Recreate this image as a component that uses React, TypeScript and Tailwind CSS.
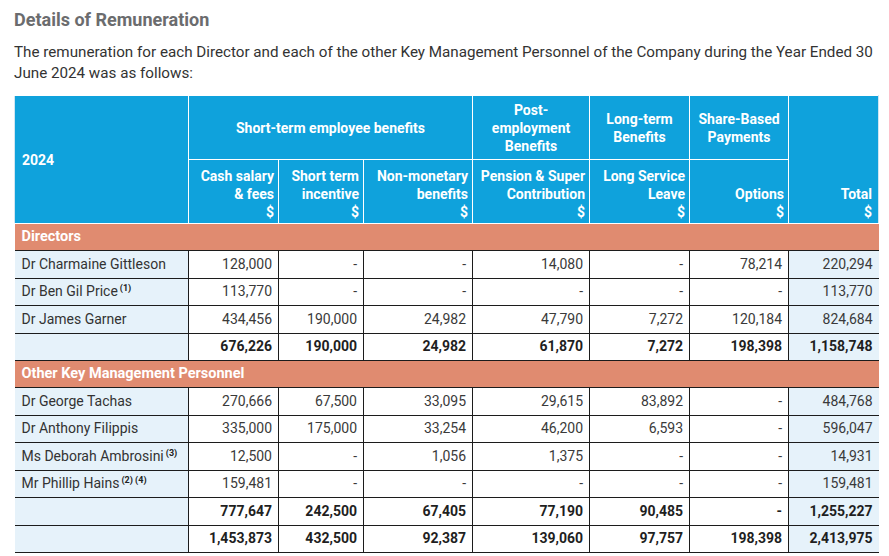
import React from "react";

const F = { fontFamily: "Roboto, 'Liberation Sans', sans-serif" };

type Row = { name: React.ReactNode; v: string[]; bold?: boolean };

const sup = (s: string) => (
  <sup className="text-[9px] font-bold text-[#222] ml-[2px] -top-[5px]">{s}</sup>
);

const directors: Row[] = [
  { name: "Dr Charmaine Gittleson", v: ["128,000", "-", "-", "14,080", "-", "78,214", "220,294"] },
  { name: <>Dr Ben Gil Price{sup("(1)")}</>, v: ["113,770", "-", "-", "-", "-", "-", "113,770"] },
  { name: "Dr James Garner", v: ["434,456", "190,000", "24,982", "47,790", "7,272", "120,184", "824,684"] },
  { name: "", v: ["676,226", "190,000", "24,982", "61,870", "7,272", "198,398", "1,158,748"], bold: true },
];

const kmp: Row[] = [
  { name: "Dr George Tachas", v: ["270,666", "67,500", "33,095", "29,615", "83,892", "-", "484,768"] },
  { name: "Dr Anthony Filippis", v: ["335,000", "175,000", "33,254", "46,200", "6,593", "-", "596,047"] },
  { name: <>Ms Deborah Ambrosini{sup("(3)")}</>, v: ["12,500", "-", "1,056", "1,375", "-", "-", "14,931"] },
  { name: <>Mr Phillip Hains{sup("(2) (4)")}</>, v: ["159,481", "-", "-", "-", "-", "-", "159,481"] },
  { name: "", v: ["777,647", "242,500", "67,405", "77,190", "90,485", "-", "1,255,227"], bold: true },
  { name: "", v: ["1,453,873", "432,500", "92,387", "139,060", "97,757", "198,398", "2,413,975"], bold: true },
];

function DataRow({ r }: { r: Row }) {
  return (
    <tr className="h-[27.5px]">
      <td className="bg-[#e6f2fa] border-y border-r border-[#1c1c1c] pl-[7px] text-[14px] text-[#333] whitespace-nowrap">
        {r.name}
      </td>
      {r.v.map((x, i) => (
        <td
          key={i}
          className={
            "border-y border-[#1c1c1c] text-right pr-[6px] text-[14px] " +
            (r.bold ? "font-bold text-[#1f1f1f] " : "text-[#3a3a3a] ") +
            (i === 6 ? "bg-[#e6f2fa]" : "border-r")
          }
        >
          {x}
        </td>
      ))}
    </tr>
  );
}

function Band({ label }: { label: string }) {
  return (
    <tr className="h-[27px] bg-[#e08b70]">
      <td colSpan={8} className="pl-[7px] text-[14.5px] font-bold text-white">
        {label}
      </td>
    </tr>
  );
}

export default function App() {
  const hc = "border border-white text-white font-bold text-[14px] leading-[18px]";
  return (
    <div style={F} className="w-[889px] h-[556px] bg-white pl-[14px] pr-[11px] pt-[8px] overflow-hidden">
      <h1 className="text-[18px] font-bold text-[#6b6c6e] leading-[24px]">Details of Remuneration</h1>
      <p className="mt-[10px] text-[15.2px] leading-[21px] text-[#333]">
        The remuneration for each Director and each of the other Key Management Personnel of the Company during the Year Ended 30 June 2024 was as follows:
      </p>
      <table className="mt-[11px] table-fixed border-collapse w-[864px]">
        <colgroup>
          <col className="w-[174px]" />
          <col className="w-[90px]" />
          <col className="w-[85px]" />
          <col className="w-[109px]" />
          <col className="w-[117px]" />
          <col className="w-[100px]" />
          <col className="w-[99px]" />
          <col className="w-[90px]" />
        </colgroup>
        <thead className="bg-[#0fa2dc]">
          <tr className="h-[64px] border-t border-[#cfe6f2]">
            <td rowSpan={2} className={hc + " border-l-[#cfe6f2] pl-[7px] align-middle text-[14.5px]"}>
              2024
            </td>
            <td colSpan={3} className={hc + " text-center align-middle text-[14.5px]"}>
              Short-term employee benefits
            </td>
            <td className={hc + " text-center align-middle px-[8px]"}>Post-employment Benefits</td>
            <td className={hc + " text-center align-middle px-[6px]"}>Long-term Benefits</td>
            <td className={hc + " text-center align-middle px-[6px]"}>Share-Based Payments</td>
            <td rowSpan={2} className={hc + " border-r-[#cfe6f2] text-right align-bottom pr-[6px] pb-[2px]"}>
              Total
              <br />$
            </td>
          </tr>
          <tr className="h-[64px]">
            <td className={hc + " text-right align-bottom pr-[4px] pb-[2px]"}>
              Cash salary & fees
              <br />$
            </td>
            <td className={hc + " text-right align-bottom pr-[4px] pb-[2px]"}>
              Short term incentive
              <br />$
            </td>
            <td className={hc + " text-right align-bottom pr-[4px] pb-[2px]"}>
              Non-monetary benefits
              <br />$
            </td>
            <td className={hc + " text-right align-bottom pr-[4px] pb-[2px] whitespace-nowrap"}>
              Pension &amp; Super
              <br />
              Contribution
              <br />$
            </td>
            <td className={hc + " text-right align-bottom pr-[4px] pb-[2px]"}>
              Long Service Leave
              <br />$
            </td>
            <td className={hc + " text-right align-bottom pr-[4px] pb-[2px]"}>
              Options
              <br />$
            </td>
          </tr>
        </thead>
        <tbody>
          <Band label="Directors" />
          {directors.map((r, i) => (
            <DataRow key={i} r={r} />
          ))}
          <Band label="Other Key Management Personnel" />
          {kmp.map((r, i) => (
            <DataRow key={i} r={r} />
          ))}
        </tbody>
      </table>
    </div>
  );
}
